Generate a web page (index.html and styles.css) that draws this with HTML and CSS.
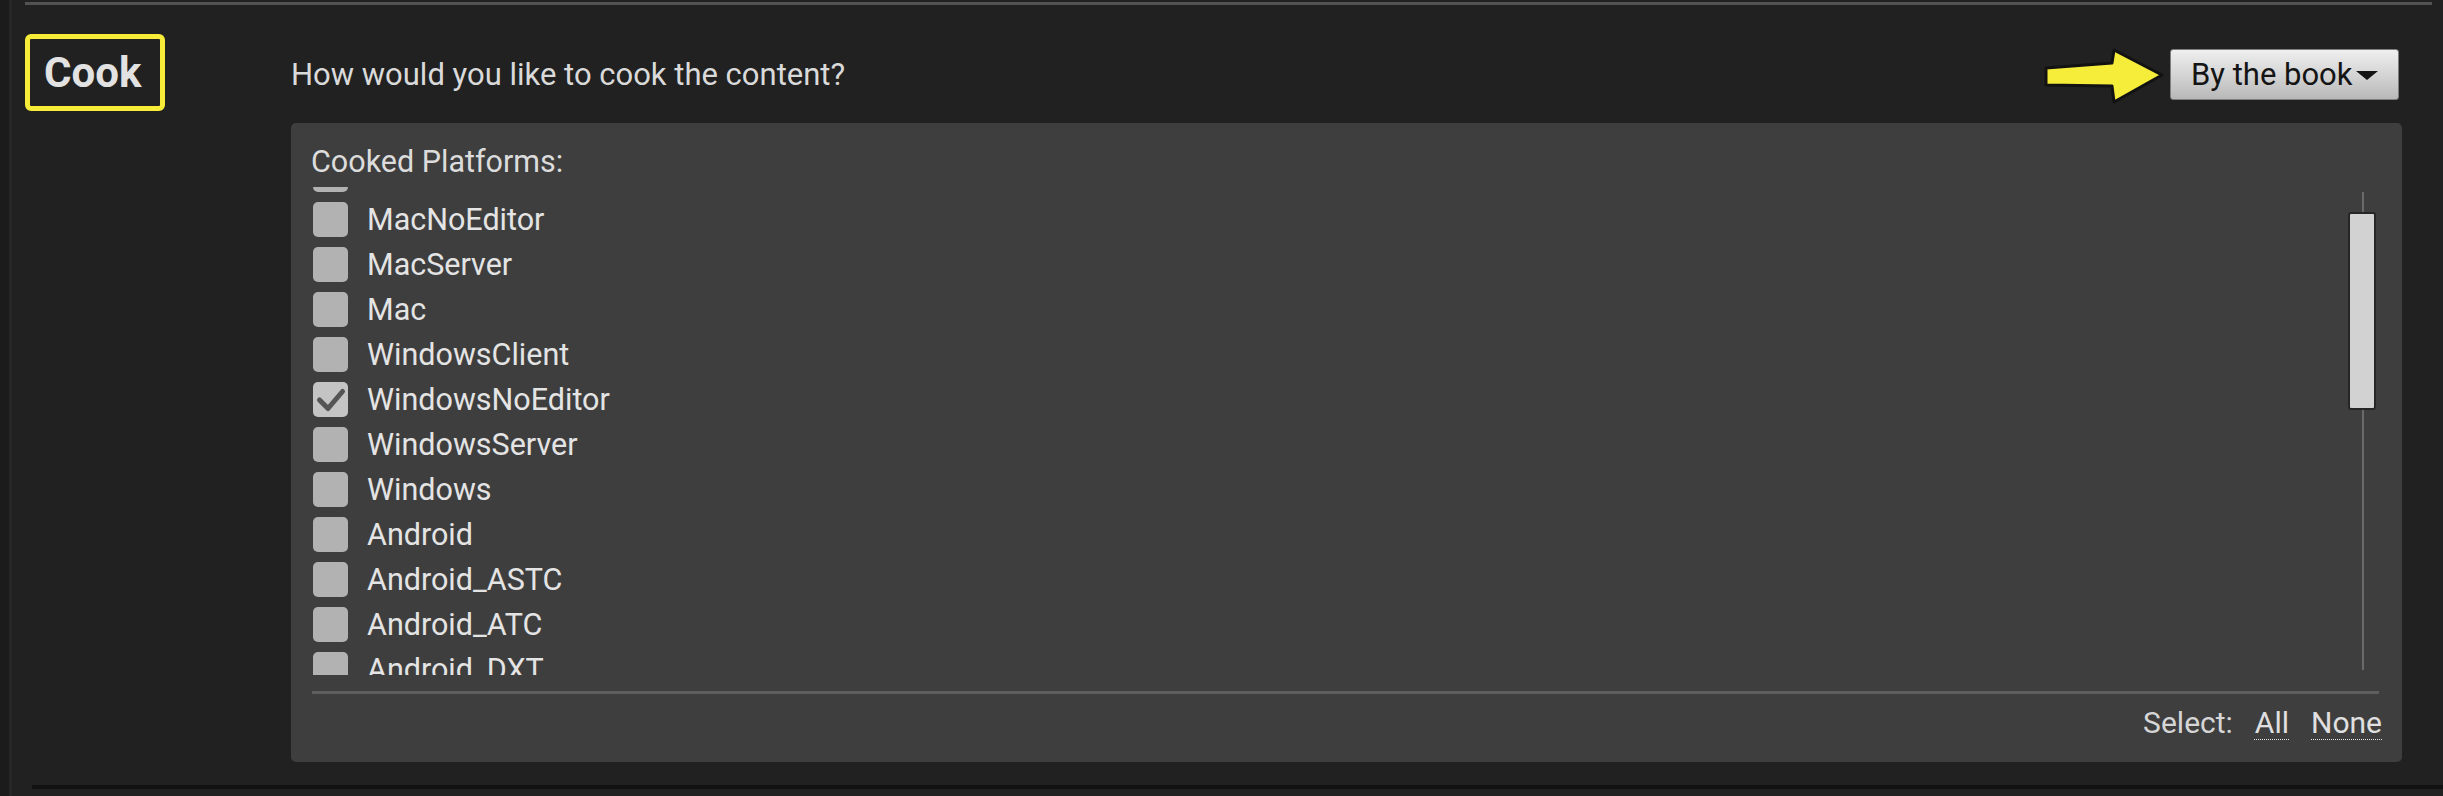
FILE: index.html
```html
<!DOCTYPE html>
<html lang="en">
<head>
<meta charset="utf-8">
<title>Cook</title>
<link rel="stylesheet" href="styles.css">
</head>
<body>
<div class="frame">
  <div class="edge"></div>
  <div class="main">
    <div class="top-rule"></div>
    <div class="section">
      <div class="label-col">
        <div class="cook-label">Cook</div>
      </div>
      <div class="content">
        <div class="header-row">
          <div class="question">How would you like to cook the content?</div>
          <svg class="arrow" width="122" height="57" viewBox="0 0 122 57">
            <polygon points="2,20 68,15 70,2 118,27 70,54 68,38 2,37" fill="#f6ec3a" stroke="#121212" stroke-width="3" stroke-linejoin="round"/>
          </svg>
          <div class="dropdown">By the book<span class="caret"></span></div>
        </div>
        <div class="panel">
          <div class="panel-title">Cooked Platforms:</div>
          <div class="list-box">
            <div class="list">
              <div class="row"><span class="check"></span></div>
              <div class="row"><span class="check"></span><span class="name">MacNoEditor</span></div>
              <div class="row"><span class="check"></span><span class="name">MacServer</span></div>
              <div class="row"><span class="check"></span><span class="name">Mac</span></div>
              <div class="row"><span class="check"></span><span class="name">WindowsClient</span></div>
              <div class="row"><span class="check checked"><svg width="35" height="35" viewBox="0 0 35 35"><polyline points="6.5,18 15,26.5 29.5,9.5" fill="none" stroke="#555555" stroke-width="5" stroke-linecap="round" stroke-linejoin="round"/></svg></span><span class="name">WindowsNoEditor</span></div>
              <div class="row"><span class="check"></span><span class="name">WindowsServer</span></div>
              <div class="row"><span class="check"></span><span class="name">Windows</span></div>
              <div class="row"><span class="check"></span><span class="name">Android</span></div>
              <div class="row"><span class="check"></span><span class="name">Android_ASTC</span></div>
              <div class="row"><span class="check"></span><span class="name">Android_ATC</span></div>
              <div class="row"><span class="check"></span><span class="name">Android_DXT</span></div>
            </div>
            <div class="scrollbar">
              <div class="thumb"></div>
            </div>
          </div>
          <div class="separator"></div>
          <div class="select-row">
            <span class="select-label">Select:</span>
            <span class="link">All</span>
            <span class="link">None</span>
          </div>
        </div>
      </div>
    </div>
    <div class="bottom-rule"></div>
  </div>
</div>
</body>
</html>
```

FILE: styles.css
```css
html, body {
  margin: 0;
  padding: 0;
}

body {
  width: 2443px;
  height: 796px;
  overflow: hidden;
  background: #212121;
  font-family: "Roboto", "Liberation Sans", sans-serif;
  color: #e0e0e0;
}

.frame {
  display: flex;
  height: 796px;
}

.edge {
  width: 9px;
  flex: none;
  background: #1b1b1b;
  border-right: 3px solid #272727;
}

.main {
  flex: 1;
  display: flex;
  flex-direction: column;
  padding-top: 2px;
  background: #212121;
}

.top-rule {
  height: 3px;
  margin-left: 13px;
  margin-right: 11px;
  background: #525252;
}

.section {
  display: flex;
}

.label-col {
  width: 279px;
  flex: none;
}

.cook-label {
  box-sizing: border-box;
  width: 140px;
  height: 77px;
  margin-left: 13px;
  margin-top: 29px;
  border: 5px solid #f7ec37;
  border-radius: 6px;
  padding-left: 14px;
  display: flex;
  align-items: center;
  font-weight: 700;
  font-size: 42px;
  color: #e2e2e2;
}

.content {
  flex: 1;
  margin-right: 41px;
}

.header-row {
  display: flex;
  align-items: center;
  height: 51px;
  margin-top: 44px;
  padding-right: 3px;
}

.question {
  font-size: 31px;
  color: #dadada;
  flex: 1;
}

.arrow {
  flex: none;
  margin-right: 4px;
  margin-top: 4px;
}

.dropdown {
  box-sizing: border-box;
  width: 229px;
  height: 51px;
  display: flex;
  align-items: center;
  padding-left: 20px;
  border: 1px solid #7e7e7e;
  border-radius: 3px;
  background: linear-gradient(#efefef, #d2d2d2 55%, #b8b8b8);
  font-size: 31px;
  color: #141414;
}

.caret {
  width: 0;
  height: 0;
  margin-left: 3px;
  margin-top: 2px;
  border-left: 11px solid transparent;
  border-right: 11px solid transparent;
  border-top: 9px solid #141414;
}

.panel {
  margin-top: 23px;
  height: 639px;
  box-sizing: border-box;
  background: #3e3e3e;
  border-radius: 5px;
  padding: 21px 20px 0 20px;
}

.panel-title {
  font-size: 30.5px;
  line-height: 36px;
  color: #dcdcdc;
}

.list-box {
  margin-top: 7px;
  height: 488px;
  overflow: hidden;
  display: flex;
}

.list {
  flex: 1;
  margin-top: -35px;
  padding-left: 2px;
}

.row {
  height: 45px;
  display: flex;
  align-items: center;
  font-size: 30.5px;
  line-height: 45px;
  color: #e4e4e4;
}

.check {
  width: 35px;
  height: 35px;
  flex: none;
  box-sizing: border-box;
  border-radius: 5px;
  background: #b2b2b2;
  margin-right: 19px;
  display: flex;
}

.check.checked {
  background: #c4c4c4;
}

.scrollbar {
  width: 28px;
  flex: none;
  margin-top: 5px;
  margin-right: 6px;
  height: 478px;
  background: linear-gradient(to right, transparent 14px, #6a6a6a 14px, #6a6a6a 16px, transparent 16px);
}

.thumb {
  box-sizing: border-box;
  margin-top: 20px;
  height: 198px;
  width: 28px;
  background: #d2d2d2;
  border: 2px solid #262626;
  border-radius: 3px;
}

.separator {
  margin-top: 16px;
  height: 3px;
  background: #5e5e5e;
  margin-left: 1px;
  margin-right: 3px;
}

.select-row {
  margin-top: 11px;
  display: flex;
  justify-content: flex-end;
  gap: 22px;
  font-size: 30px;
  line-height: 36px;
  color: #d6d6d6;
}

.link {
  color: #e0e0e0;
  text-decoration: underline dotted #e8e8e8 1px;
  text-underline-offset: 6px;
}

.bottom-rule {
  margin-top: 23px;
  height: 4px;
  margin-left: 20px;
  background: #121212;
}
```
